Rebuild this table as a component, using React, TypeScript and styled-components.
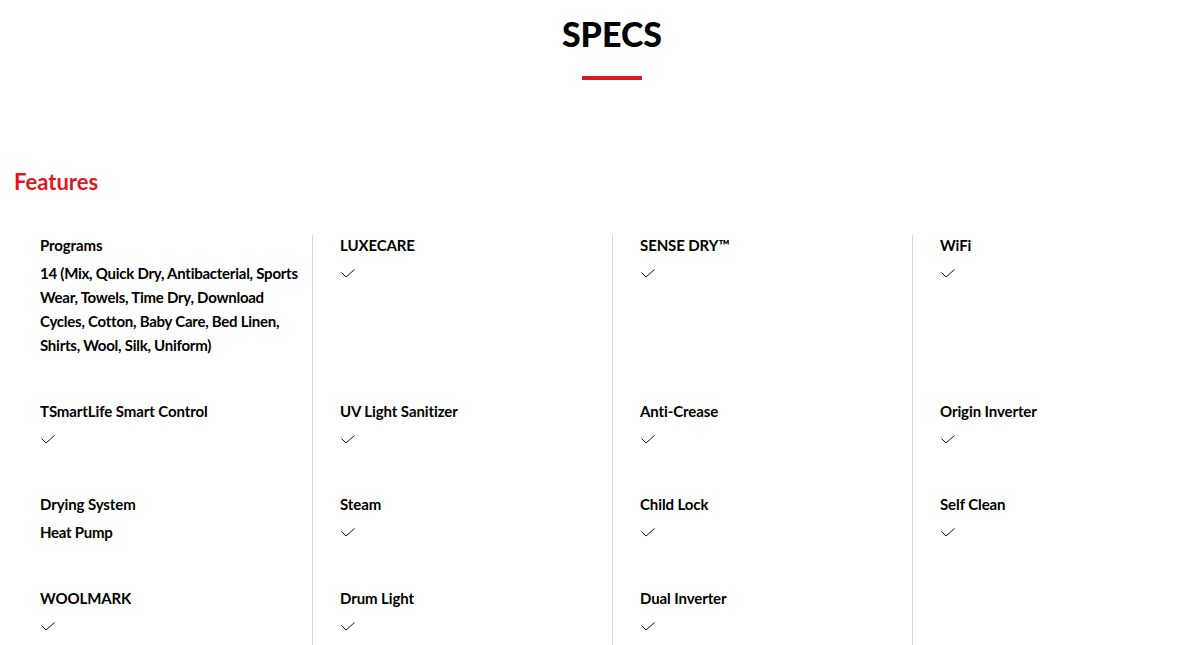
import React from 'react';
import styled, { createGlobalStyle } from 'styled-components';

const GlobalStyle = createGlobalStyle`
  html, body {
    margin: 0;
    padding: 0;
    background: #fff;
    overflow: hidden;
  }
  body {
    font-family: Lato, 'Liberation Sans', sans-serif;
    color: #000;
  }
`;

type Feature = { label: string; value?: string };

const features: Feature[] = [
  {
    label: 'Programs',
    value:
      '14 (Mix, Quick Dry, Antibacterial, Sports Wear, Towels, Time Dry, Download Cycles, Cotton, Baby Care, Bed Linen, Shirts, Wool, Silk, Uniform)',
  },
  { label: 'LUXECARE' },
  { label: 'SENSE DRY™' },
  { label: 'WiFi' },
  { label: 'TSmartLife Smart Control' },
  { label: 'UV Light Sanitizer' },
  { label: 'Anti-Crease' },
  { label: 'Origin Inverter' },
  { label: 'Drying System', value: 'Heat Pump' },
  { label: 'Steam' },
  { label: 'Child Lock' },
  { label: 'Self Clean' },
  { label: 'WOOLMARK' },
  { label: 'Drum Light' },
  { label: 'Dual Inverter' },
];

const Page = styled.div`
  width: 1200px;
  height: 645px;
  margin-left: 12px;
  overflow: hidden;
`;

const Header = styled.header`
  display: flex;
  flex-direction: column;
  align-items: center;
  padding-top: 13px;
`;

const Title = styled.h1`
  margin: 0;
  font-size: 34px;
  line-height: 42px;
  font-weight: 900;
`;

const TitleBar = styled.span`
  display: block;
  width: 60px;
  height: 4px;
  margin-top: 21px;
  background: #e3161f;
`;

const Section = styled.section`
  padding-top: 88px;
`;

const SectionTitle = styled.h2`
  margin: 0 0 0 2px;
  font-size: 22px;
  line-height: 28px;
  font-weight: 700;
  color: #e3161f;
`;

const Grid = styled.div`
  display: grid;
  grid-template-columns: repeat(4, 300px);
  margin-top: 39px;
`;

const Cell = styled.div<{ $first: boolean }>`
  padding: 0 6px 44px ${(p) => (p.$first ? '28px' : '27px')};
  border-left: ${(p) => (p.$first ? 'none' : '1px solid #d6d6d6')};
`;

const Label = styled.div`
  font-size: 15px;
  line-height: 20px;
  font-weight: 700;
  letter-spacing: -0.1px;
`;

const Value = styled.div`
  font-size: 15px;
  line-height: 24px;
  font-weight: 700;
  letter-spacing: -0.25px;
  margin-top: 6px;
`;

const Check = styled.svg`
  display: block;
  margin: 14px 0 6px 1px;
  width: 14px;
  height: 9px;
`;

const CheckIcon = () => (
  <Check viewBox="0 0 14 9" fill="none">
    <path d="M0.5 3.5 L5 8 L13.5 0.5" stroke="#111" strokeWidth="1" />
  </Check>
);

export default function App() {
  const cells = [...features, null];
  return (
    <Page>
      <GlobalStyle />
      <Header>
        <Title>SPECS</Title>
        <TitleBar />
      </Header>
      <Section>
        <SectionTitle>Features</SectionTitle>
        <Grid>
          {cells.map((f, i) => (
            <Cell key={i} $first={i % 4 === 0}>
              {f && (
                <>
                  <Label>{f.label}</Label>
                  {f.value ? <Value>{f.value}</Value> : <CheckIcon />}
                </>
              )}
            </Cell>
          ))}
        </Grid>
      </Section>
    </Page>
  );
}
